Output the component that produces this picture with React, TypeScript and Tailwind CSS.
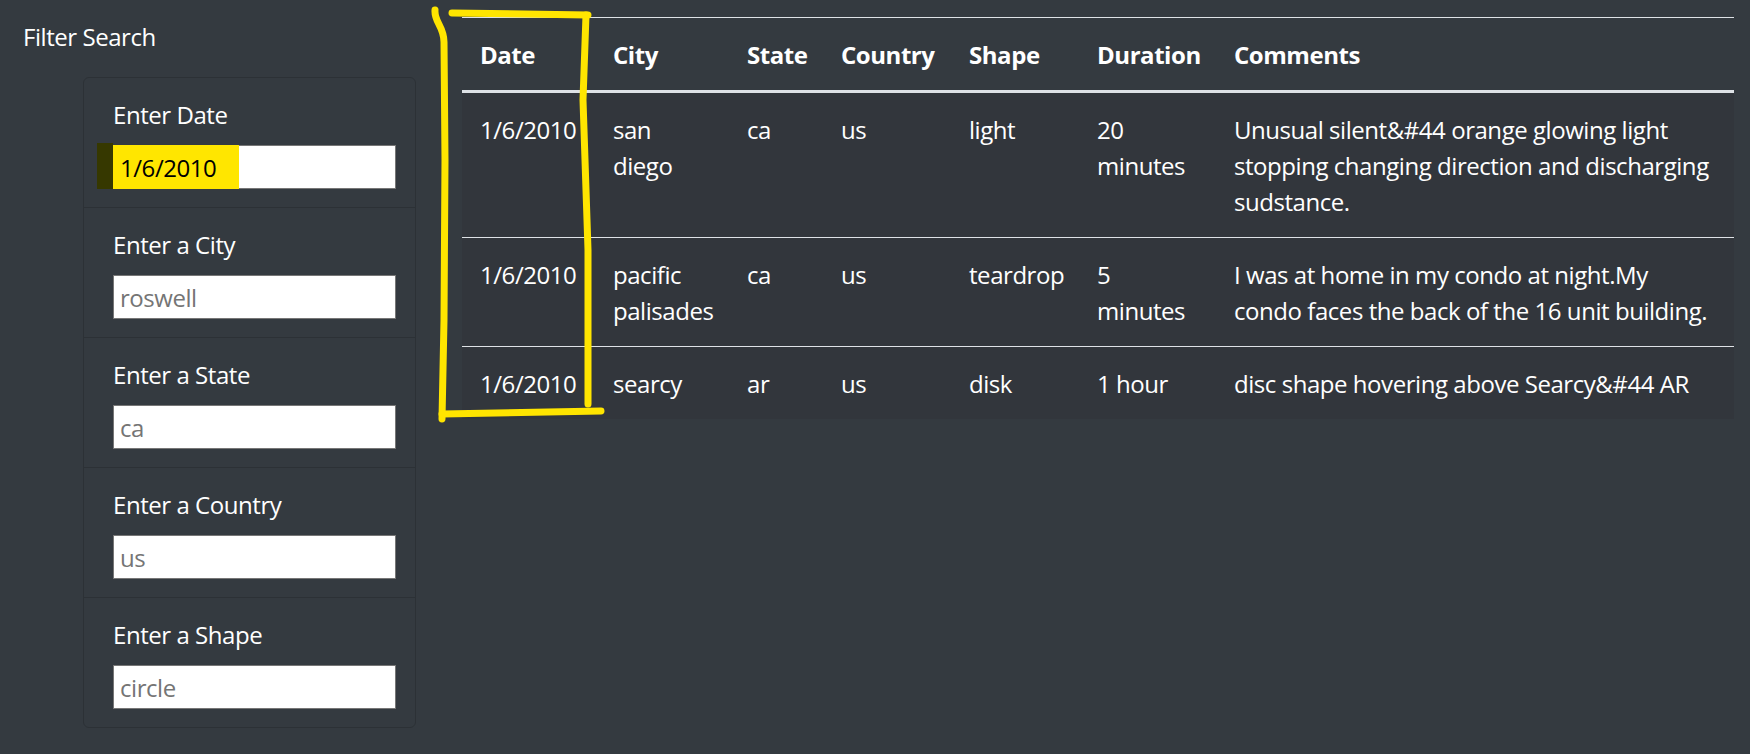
import React from "react"

const font = { fontFamily: '"Open Sans", "Noto Sans", sans-serif' }

const filters = [
    { label: "Enter Date", placeholder: "", value: "1/6/2010" },
    { label: "Enter a City", placeholder: "roswell" },
    { label: "Enter a State", placeholder: "ca" },
    { label: "Enter a Country", placeholder: "us" },
    { label: "Enter a Shape", placeholder: "circle" },
]

const rows = [
    {
        date: "1/6/2010", city: "san diego", state: "ca", country: "us", shape: "light", duration: "20 minutes",
        comments: ["Unusual silent&#44 orange glowing light", "stopping changing direction and discharging", "sudstance."],
    },
    {
        date: "1/6/2010", city: "pacific palisades", state: "ca", country: "us", shape: "teardrop", duration: "5 minutes",
        comments: ["I was at home in my condo at night.My", "condo faces the back of the 16 unit building."],
    },
    {
        date: "1/6/2010", city: "searcy", state: "ar", country: "us", shape: "disk", duration: "1 hour",
        comments: ["disc shape hovering above Searcy&#44 AR"],
    },
]

const headers = ["Date", "City", "State", "Country", "Shape", "Duration", "Comments"]

const FilterItem = ({ label, placeholder, value, first }: { label: string, placeholder: string, value?: string, first: boolean }) => {
    return (
        <li className={`px-[29px] pt-[19px] pb-[18px] ${first ? '' : 'border-t border-[#2c3136]'}`}>
            <label className="block mb-[12px] text-white">{label}</label>
            {value ? (
                <div className="relative w-[283px] h-[44px] bg-white border-[1.5px] border-[#767676]">
                    {/* highlighter marks */}
                    <span className="absolute left-[-17px] top-[-3px] w-[16px] h-[46px] bg-[#363800]" />
                    <span className="absolute left-[-1.5px] top-[-1.5px] w-[126px] h-[44px] bg-[#ffe600]" />
                    <input
                        readOnly
                        value={value}
                        className="relative w-full h-full bg-transparent px-[6px] text-black outline-none"
                    />
                </div>
            ) : (
                <input
                    placeholder={placeholder}
                    className="block w-[283px] h-[44px] bg-white border-[1.5px] border-[#767676] px-[6px] text-black placeholder:text-[#757575] outline-none"
                />
            )}
        </li>
    )
}

export default function App() {
    return (
        <div className="relative min-h-screen bg-[#343a40] text-white text-[24px] leading-[36px] tracking-[-0.45px] flex" style={font}>
            <aside className="w-[440px] shrink-0 pt-[19px] pl-[23px]">
                <h5 className="text-[24px] leading-[36px]">Filter Search</h5>
                <ul className="ml-[60px] mt-[22px] w-[333px] rounded-[6px] border border-[#2c3136]">
                    {filters.map((f, i) => (
                        <FilterItem key={f.label} {...f} first={i === 0} />
                    ))}
                </ul>
            </aside>

            <main className="pt-[17px] pl-[22px]">
                <table className="table-fixed w-[1272px] border-collapse text-left">
                    <colgroup>
                        <col className="w-[133px]" />
                        <col className="w-[134px]" />
                        <col className="w-[94px]" />
                        <col className="w-[128px]" />
                        <col className="w-[128px]" />
                        <col className="w-[137px]" />
                        <col />
                    </colgroup>
                    <thead>
                        <tr className="border-t border-[#dee2e6] border-b-[3px] border-b-[#dee2e6]">
                            {headers.map(h => (
                                <th key={h} className="px-[18px] pt-[19px] pb-[17px] font-bold align-bottom">{h}</th>
                            ))}
                        </tr>
                    </thead>
                    <tbody className="bg-[#32363c]">
                        {rows.map((r, i) => (
                            <tr key={i} className={i === 0 ? '' : 'border-t border-[#dee2e6]'}>
                                <td className="px-[18px] pt-[19px] pb-[17px] align-top whitespace-nowrap">{r.date}</td>
                                <td className="px-[18px] pt-[19px] pb-[17px] align-top">{r.city}</td>
                                <td className="px-[18px] pt-[19px] pb-[17px] align-top">{r.state}</td>
                                <td className="px-[18px] pt-[19px] pb-[17px] align-top">{r.country}</td>
                                <td className="px-[18px] pt-[19px] pb-[17px] align-top">{r.shape}</td>
                                <td className="px-[18px] pt-[19px] pb-[17px] align-top">{r.duration}</td>
                                <td className="px-[18px] pt-[19px] pb-[17px] align-top whitespace-nowrap">
                                    {r.comments.map((line, j) => (
                                        <div key={j}>{line}</div>
                                    ))}
                                </td>
                            </tr>
                        ))}
                    </tbody>
                </table>
            </main>

            {/* hand-drawn yellow box around the Date column */}
            <svg className="absolute left-0 top-0 pointer-events-none" width="1750" height="754">
                <g fill="none" stroke="#ffe500" strokeWidth="7" strokeLinecap="round" strokeLinejoin="round">
                    <path d="M435 10 C434 22 444 26 444 42 L445 160 L444 320 L442 419" />
                    <path d="M452 13 L588 15" />
                    <path d="M586 15 L583 100 L588 250 L588 404" />
                    <path d="M442 414 L601 411" />
                </g>
            </svg>
        </div>
    )
}
